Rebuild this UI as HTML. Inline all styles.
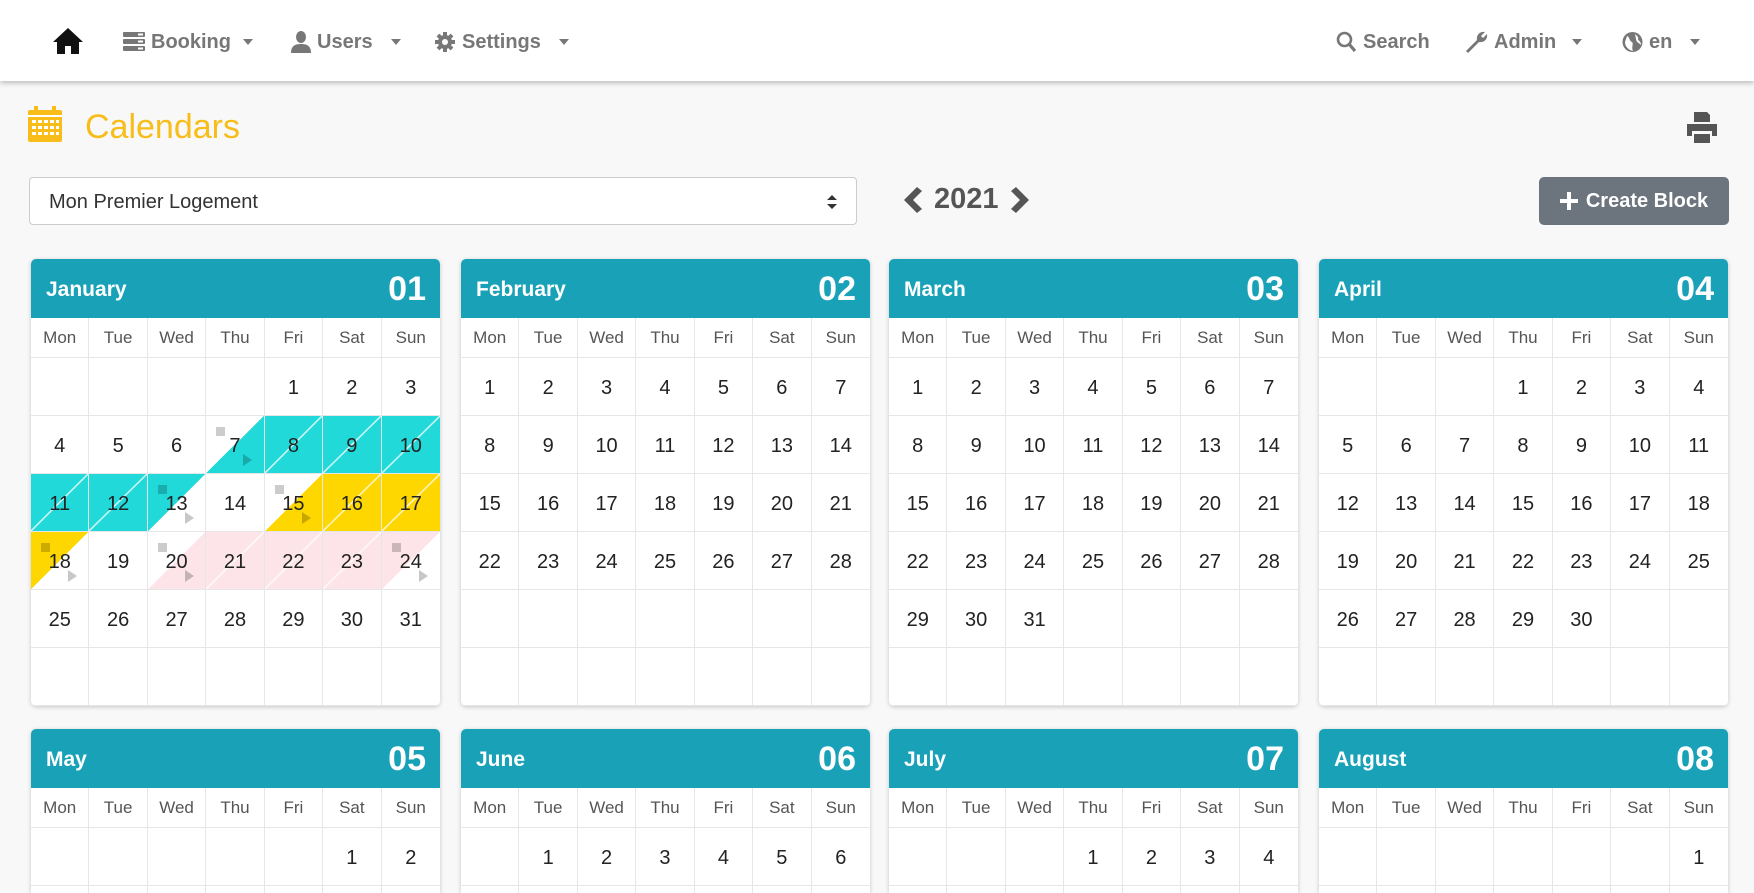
<!DOCTYPE html>
<html><head><meta charset="utf-8"><style>
*{box-sizing:border-box;margin:0;padding:0}
html{width:1754px;height:893px;overflow:hidden}
body{width:1754px;height:893px;overflow:hidden;background:#f8f8f8;font-family:"Liberation Sans",sans-serif;position:relative}
.nav{position:absolute;left:0;top:0;width:1754px;height:81px;background:#fff;box-shadow:0 2px 5px rgba(0,0,0,.25);z-index:2}
.ni{position:absolute;top:30px;font-size:20px;font-weight:bold;color:#777;display:flex;align-items:center;gap:6px;height:24px}
.ni svg{fill:#777}
.car{width:0;height:0;border-left:5px solid transparent;border-right:5px solid transparent;border-top:6px solid #777;margin-left:6px}
h1{position:absolute;left:85px;top:108px;font-size:34px;font-weight:normal;color:#f8bd19}
.sel{position:absolute;left:29px;top:177px;width:828px;height:48px;background:#fff;border:1px solid #ccc;border-radius:4px;font-size:20px;color:#333;padding:13px 0 0 19px}
.year{position:absolute;left:904px;top:183px;font-size:29px;font-weight:bold;color:#555;display:flex;align-items:center;gap:12px}
.btn{position:absolute;left:1539px;top:177px;width:190px;height:48px;background:#6c757d;border-radius:5px;color:#fff;font-size:20px;font-weight:bold;display:flex;align-items:center;justify-content:center;gap:8px}
.card{position:absolute;width:409px;background:#fff;border-radius:5px;box-shadow:0 1px 5px rgba(0,0,0,.2);overflow:hidden;display:grid;grid-template-columns:repeat(7,1fr);grid-template-rows:59px 40px repeat(6,58px)}
.r2{height:164px;border-radius:5px 5px 0 0}
.hd{grid-column:1/8;background:#18a1b7;color:#fff;display:flex;justify-content:space-between;align-items:center;padding:2px 14px 0 15px}
.hd b{font-size:21px}.hd span{font-size:34px;font-weight:bold}
.dn{font-size:17px;color:#555;display:flex;align-items:center;justify-content:center;border-right:1px solid #e6e6e6;border-bottom:1px solid #e6e6e6}
.c{font-size:20px;color:#222;display:flex;align-items:center;justify-content:center;padding-top:3px;border-right:1px solid #e6e6e6;border-bottom:1px solid #e6e6e6;position:relative}
.dn:nth-child(7n+1),.c:nth-child(7n+1){border-right:none}
.t{--c:#21d9d9}.y{--c:#fed600}.p{--c:#fde4e8}
.f{background:linear-gradient(to bottom right,var(--c) calc(50% - 1.2px),#fff 50%,var(--c) calc(50% + 1.2px))}
.s{background:linear-gradient(to bottom right,transparent 50%,var(--c) 50%)}
.e{background:linear-gradient(to bottom right,var(--c) 50%,transparent 50%)}
.s::before,.e::before{content:"";position:absolute;left:10px;top:11px;width:9px;height:9px;background:rgba(0,0,0,.2)}
.s::after,.e::after{content:"";position:absolute;left:37px;top:38px;border-top:6px solid transparent;border-bottom:6px solid transparent;border-left:9px solid rgba(0,0,0,.22)}
</style></head><body>
<div class="nav">
<svg style="position:absolute;left:52px;top:27px" width="32" height="28" viewBox="0 0 32 28"><path d="M16 1 L1 15 H5 V27 H13 V19 H19 V27 H27 V15 H31 Z" fill="#111"/></svg>
<div class="ni" style="left:123px"><svg width="22" height="20" viewBox="0 0 22 20"><rect x="0" y="0" width="22" height="5" rx="1"/><rect x="0" y="7" width="22" height="5" rx="1"/><rect x="0" y="14" width="22" height="5" rx="1"/><rect x="15" y="1.5" width="5" height="2" fill="#fff"/><rect x="15" y="8.5" width="5" height="2" fill="#fff"/><rect x="15" y="15.5" width="5" height="2" fill="#fff"/></svg>Booking<span class="car"></span></div>
<div class="ni" style="left:291px"><svg width="20" height="22" viewBox="0 0 20 22"><ellipse cx="10" cy="6" rx="5" ry="6"/><path d="M0 22 C0 15 4 13 10 13 C16 13 20 15 20 22 Z"/></svg>Users<span class="car" style="margin-left:12px"></span></div>
<div class="ni" style="left:434px"><svg width="22" height="22" viewBox="0 0 22 22"><circle cx="11" cy="11" r="7"/><g stroke="#777" stroke-width="4"><line x1="11" y1="1" x2="11" y2="21"/><line x1="1" y1="11" x2="21" y2="11"/><line x1="4" y1="4" x2="18" y2="18"/><line x1="18" y1="4" x2="4" y2="18"/></g><circle cx="11" cy="11" r="3" fill="#fff"/></svg>Settings<span class="car" style="margin-left:12px"></span></div>
<div class="ni" style="left:1336px"><svg width="21" height="22" viewBox="0 0 21 22"><circle cx="8.5" cy="8.5" r="6.5" fill="none" stroke="#777" stroke-width="2.6"/><line x1="13" y1="13" x2="19" y2="20" stroke="#777" stroke-width="3.2"/></svg>Search</div>
<div class="ni" style="left:1465px"><svg width="23" height="22" viewBox="0 0 23 22"><path d="M1 20 L12 9 C11 4 15 0 20 1 L16 5 L18 7 L22 3 C23 8 19 12 14 11 L3 22 Z"/></svg>Admin<span class="car" style="margin-left:10px"></span></div>
<div class="ni" style="left:1622px"><svg width="21" height="22" viewBox="0 0 21 22"><circle cx="10.5" cy="11" r="10"/><path d="M5 5 C8 6 7 10 10 11 C12 13 9 16 11 20 C6 19 3 15 3 11 Z M13 3 C15 5 17 6 16 9 C18 10 19 12 19 14 C17 12 14 11 14 8 Z" fill="#fff"/></svg>en<span class="car" style="margin-left:12px"></span></div>
</div>
<svg style="position:absolute;left:28px;top:106px" width="34" height="36" viewBox="0 0 34 36"><rect x="0" y="4" width="34" height="32" rx="2" fill="#f8bd19"/><rect x="6" y="0" width="4" height="8" fill="#f8bd19"/><rect x="24" y="0" width="4" height="8" fill="#f8bd19"/><rect x="0" y="9" width="34" height="2" fill="#fff"/><g fill="#fff"><rect x="4" y="14" width="4" height="3"/><rect x="10" y="14" width="4" height="3"/><rect x="16" y="14" width="4" height="3"/><rect x="22" y="14" width="4" height="3"/><rect x="28" y="14" width="3" height="3"/><rect x="4" y="20" width="4" height="3"/><rect x="10" y="20" width="4" height="3"/><rect x="16" y="20" width="4" height="3"/><rect x="22" y="20" width="4" height="3"/><rect x="28" y="20" width="3" height="3"/><rect x="4" y="26" width="4" height="3"/><rect x="10" y="26" width="4" height="3"/><rect x="16" y="26" width="4" height="3"/><rect x="22" y="26" width="4" height="3"/><rect x="28" y="26" width="3" height="3"/></g></svg>
<h1>Calendars</h1>
<svg style="position:absolute;left:1687px;top:112px" width="30" height="31" viewBox="0 0 30 31"><path d="M7 0 H20 L23 3 V10 H7 Z M0 12 H30 V24 H25 V19 H5 V24 H0 Z M7 22 H23 V31 H7 Z" fill="#555"/></svg>
<div class="sel">Mon Premier Logement<svg style="position:absolute;right:19px;top:17px" width="10" height="14" viewBox="0 0 10 14"><path d="M5 0 L10 5 H0 Z M0 9 H10 L5 14 Z" fill="#333"/></svg></div>
<div class="year"><svg width="18" height="26" viewBox="0 0 18 26"><path d="M13 0 L18 4 L9 13 L18 22 L13 26 L0 13 Z" fill="#555"/></svg>2021<svg width="18" height="26" viewBox="0 0 18 26"><path d="M5 0 L0 4 L9 13 L0 22 L5 26 L18 13 Z" fill="#555"/></svg></div>
<div class="btn"><svg width="18" height="18" viewBox="0 0 18 18"><path d="M7 0 H11 V7 H18 V11 H11 V18 H7 V11 H0 V7 H7 Z" fill="#fff"/></svg>Create Block</div>

<div class="card" style="left:31px;top:259px"><div class="hd"><b>January</b><span>01</span></div>
<div class="dn">Mon</div><div class="dn">Tue</div><div class="dn">Wed</div><div class="dn">Thu</div><div class="dn">Fri</div><div class="dn">Sat</div><div class="dn">Sun</div>
<div class="c"></div><div class="c"></div><div class="c"></div><div class="c"></div><div class="c">1</div><div class="c">2</div><div class="c">3</div>
<div class="c">4</div><div class="c">5</div><div class="c">6</div><div class="c t s">7</div><div class="c t f">8</div><div class="c t f">9</div><div class="c t f">10</div>
<div class="c t f">11</div><div class="c t f">12</div><div class="c t e">13</div><div class="c">14</div><div class="c y s">15</div><div class="c y f">16</div><div class="c y f">17</div>
<div class="c y e">18</div><div class="c">19</div><div class="c p s">20</div><div class="c p f">21</div><div class="c p f">22</div><div class="c p f">23</div><div class="c p e">24</div>
<div class="c">25</div><div class="c">26</div><div class="c">27</div><div class="c">28</div><div class="c">29</div><div class="c">30</div><div class="c">31</div>
<div class="c"></div><div class="c"></div><div class="c"></div><div class="c"></div><div class="c"></div><div class="c"></div><div class="c"></div>
</div>

<div class="card" style="left:461px;top:259px"><div class="hd"><b>February</b><span>02</span></div>
<div class="dn">Mon</div><div class="dn">Tue</div><div class="dn">Wed</div><div class="dn">Thu</div><div class="dn">Fri</div><div class="dn">Sat</div><div class="dn">Sun</div>
<div class="c">1</div><div class="c">2</div><div class="c">3</div><div class="c">4</div><div class="c">5</div><div class="c">6</div><div class="c">7</div>
<div class="c">8</div><div class="c">9</div><div class="c">10</div><div class="c">11</div><div class="c">12</div><div class="c">13</div><div class="c">14</div>
<div class="c">15</div><div class="c">16</div><div class="c">17</div><div class="c">18</div><div class="c">19</div><div class="c">20</div><div class="c">21</div>
<div class="c">22</div><div class="c">23</div><div class="c">24</div><div class="c">25</div><div class="c">26</div><div class="c">27</div><div class="c">28</div>
<div class="c"></div><div class="c"></div><div class="c"></div><div class="c"></div><div class="c"></div><div class="c"></div><div class="c"></div>
<div class="c"></div><div class="c"></div><div class="c"></div><div class="c"></div><div class="c"></div><div class="c"></div><div class="c"></div>
</div>

<div class="card" style="left:889px;top:259px"><div class="hd"><b>March</b><span>03</span></div>
<div class="dn">Mon</div><div class="dn">Tue</div><div class="dn">Wed</div><div class="dn">Thu</div><div class="dn">Fri</div><div class="dn">Sat</div><div class="dn">Sun</div>
<div class="c">1</div><div class="c">2</div><div class="c">3</div><div class="c">4</div><div class="c">5</div><div class="c">6</div><div class="c">7</div>
<div class="c">8</div><div class="c">9</div><div class="c">10</div><div class="c">11</div><div class="c">12</div><div class="c">13</div><div class="c">14</div>
<div class="c">15</div><div class="c">16</div><div class="c">17</div><div class="c">18</div><div class="c">19</div><div class="c">20</div><div class="c">21</div>
<div class="c">22</div><div class="c">23</div><div class="c">24</div><div class="c">25</div><div class="c">26</div><div class="c">27</div><div class="c">28</div>
<div class="c">29</div><div class="c">30</div><div class="c">31</div><div class="c"></div><div class="c"></div><div class="c"></div><div class="c"></div>
<div class="c"></div><div class="c"></div><div class="c"></div><div class="c"></div><div class="c"></div><div class="c"></div><div class="c"></div>
</div>

<div class="card" style="left:1319px;top:259px"><div class="hd"><b>April</b><span>04</span></div>
<div class="dn">Mon</div><div class="dn">Tue</div><div class="dn">Wed</div><div class="dn">Thu</div><div class="dn">Fri</div><div class="dn">Sat</div><div class="dn">Sun</div>
<div class="c"></div><div class="c"></div><div class="c"></div><div class="c">1</div><div class="c">2</div><div class="c">3</div><div class="c">4</div>
<div class="c">5</div><div class="c">6</div><div class="c">7</div><div class="c">8</div><div class="c">9</div><div class="c">10</div><div class="c">11</div>
<div class="c">12</div><div class="c">13</div><div class="c">14</div><div class="c">15</div><div class="c">16</div><div class="c">17</div><div class="c">18</div>
<div class="c">19</div><div class="c">20</div><div class="c">21</div><div class="c">22</div><div class="c">23</div><div class="c">24</div><div class="c">25</div>
<div class="c">26</div><div class="c">27</div><div class="c">28</div><div class="c">29</div><div class="c">30</div><div class="c"></div><div class="c"></div>
<div class="c"></div><div class="c"></div><div class="c"></div><div class="c"></div><div class="c"></div><div class="c"></div><div class="c"></div>
</div>

<div class="card r2" style="left:31px;top:729px"><div class="hd"><b>May</b><span>05</span></div>
<div class="dn">Mon</div><div class="dn">Tue</div><div class="dn">Wed</div><div class="dn">Thu</div><div class="dn">Fri</div><div class="dn">Sat</div><div class="dn">Sun</div>
<div class="c"></div><div class="c"></div><div class="c"></div><div class="c"></div><div class="c"></div><div class="c">1</div><div class="c">2</div>
<div class="c">3</div><div class="c">4</div><div class="c">5</div><div class="c">6</div><div class="c">7</div><div class="c">8</div><div class="c">9</div>
</div>

<div class="card r2" style="left:461px;top:729px"><div class="hd"><b>June</b><span>06</span></div>
<div class="dn">Mon</div><div class="dn">Tue</div><div class="dn">Wed</div><div class="dn">Thu</div><div class="dn">Fri</div><div class="dn">Sat</div><div class="dn">Sun</div>
<div class="c"></div><div class="c">1</div><div class="c">2</div><div class="c">3</div><div class="c">4</div><div class="c">5</div><div class="c">6</div>
<div class="c">7</div><div class="c">8</div><div class="c">9</div><div class="c">10</div><div class="c">11</div><div class="c">12</div><div class="c">13</div>
</div>

<div class="card r2" style="left:889px;top:729px"><div class="hd"><b>July</b><span>07</span></div>
<div class="dn">Mon</div><div class="dn">Tue</div><div class="dn">Wed</div><div class="dn">Thu</div><div class="dn">Fri</div><div class="dn">Sat</div><div class="dn">Sun</div>
<div class="c"></div><div class="c"></div><div class="c"></div><div class="c">1</div><div class="c">2</div><div class="c">3</div><div class="c">4</div>
<div class="c">5</div><div class="c">6</div><div class="c">7</div><div class="c">8</div><div class="c">9</div><div class="c">10</div><div class="c">11</div>
</div>

<div class="card r2" style="left:1319px;top:729px"><div class="hd"><b>August</b><span>08</span></div>
<div class="dn">Mon</div><div class="dn">Tue</div><div class="dn">Wed</div><div class="dn">Thu</div><div class="dn">Fri</div><div class="dn">Sat</div><div class="dn">Sun</div>
<div class="c"></div><div class="c"></div><div class="c"></div><div class="c"></div><div class="c"></div><div class="c"></div><div class="c">1</div>
<div class="c">2</div><div class="c">3</div><div class="c">4</div><div class="c">5</div><div class="c">6</div><div class="c">7</div><div class="c">8</div>
</div>
</body></html>
